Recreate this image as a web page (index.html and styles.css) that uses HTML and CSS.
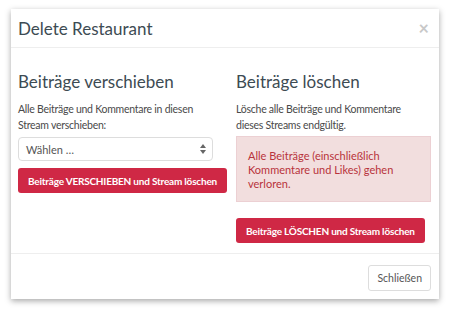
FILE: index.html
```html
<!DOCTYPE html>
<html lang="de">
<head>
  <meta charset="UTF-8">
  <title>Delete Restaurant</title>
  <link rel="stylesheet" href="styles.css">
</head>
<body>
  <div class="modal">
    <div class="modal-header">
      <h4>Delete Restaurant</h4>
      <span class="close">&times;</span>
    </div>

    <div class="modal-body">
      <div class="col">
        <h3>Beiträge verschieben</h3>
        <p>Alle Beiträge und Kommentare in diesen Stream verschieben:</p>
        <div class="select">
          <span>Wählen …</span>
          <svg width="6" height="10" viewBox="0 0 6 10"><path d="M0 4 L3 0 L6 4 Z M0 6 L3 10 L6 6 Z" fill="#666"/></svg>
        </div>
        <button class="btn-danger">Beiträge VERSCHIEBEN und Stream löschen</button>
      </div>

      <div class="col">
        <h3>Beiträge löschen</h3>
        <p>Lösche alle Beiträge und Kommentare dieses Streams endgültig.</p>
        <div class="alert">Alle Beiträge (einschließlich Kommentare und Likes) gehen verloren.</div>
        <button class="btn-danger">Beiträge LÖSCHEN und Stream löschen</button>
      </div>
    </div>

    <div class="modal-footer">
      <button class="btn-default">Schließen</button>
    </div>
  </div>
</body>
</html>
```

FILE: styles.css
```css
body {
  margin: 0;
  padding: 9px 11px;
  background: #fff;
  font-family: 'Lato', sans-serif;
  color: #555;
}
.modal {
  width: 428px;
  background: #fff;
  box-shadow: 0 2px 6px rgba(0, 0, 0, 0.35);
}
.modal-header {
  display: flex;
  justify-content: space-between;
  align-items: center;
  height: 38px;
  padding: 0 10px 0 7px;
  border-bottom: 1px solid #eee;
}
.modal-header h4 {
  margin: 0;
  font-size: 17px;
  font-weight: 400;
  color: #3d4b53;
}
.close {
  font-size: 18px;
  font-weight: bold;
  color: #c8c8c8;
  line-height: 1;
}
.modal-body {
  display: flex;
  gap: 23px;
  padding: 23px 8px 0 7px;
  height: 182px;
}
.col {
  width: 195px;
}
h3 {
  margin: 0;
  font-size: 17px;
  font-weight: 400;
  color: #3d4b53;
  line-height: 22px;
}
p {
  margin: 8px 0 3px;
  padding-right: 12px;
  font-size: 10.5px;
  letter-spacing: -0.25px;
  line-height: 16px;
  color: #4a4a4a;
}
.select {
  display: flex;
  justify-content: space-between;
  align-items: center;
  height: 22px;
  margin-top: 4px;
  padding: 0 6px 0 7px;
  border: 1px solid #ddd;
  border-radius: 4px;
  font-size: 11px;
  color: #555;
  margin-bottom: 7px;
}
.btn-danger {
  display: block;
  white-space: nowrap;
  height: 25px;
  padding: 0 10px;
  border: none;
  border-radius: 3px;
  background: #cf2845;
  color: #fff;
  font-family: 'Lato', sans-serif;
  font-size: 10px;
  letter-spacing: -0.2px;
  font-weight: bold;
}
.alert {
  margin-top: 3px;
  padding: 12px 11px 10px;
  background: #f2dede;
  border: 1px solid #ecd0d3;
  font-size: 11px;
  line-height: 14px;
  color: #b8333b;
  margin-bottom: 16px;
}
.modal-footer {
  display: flex;
  justify-content: flex-end;
  padding: 11px 8px 8px;
  border-top: 1px solid #eee;
}
.btn-default {
  height: 26px;
  padding: 0 8px;
  background: #fff;
  border: 1px solid #ddd;
  border-radius: 3px;
  font-family: 'Lato', sans-serif;
  font-size: 10.5px;
  color: #555;
}
```
